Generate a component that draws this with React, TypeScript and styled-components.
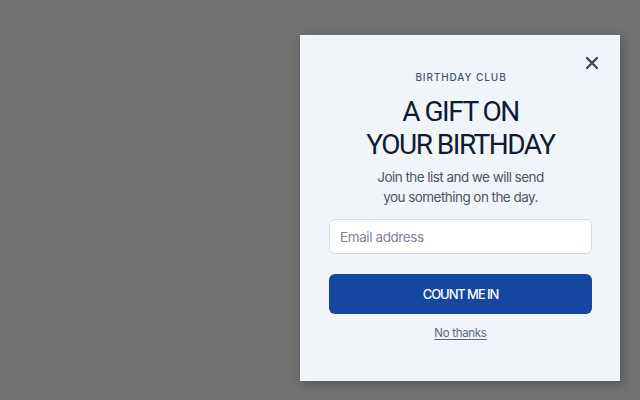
import styled, { createGlobalStyle } from "styled-components";

const GlobalStyle = createGlobalStyle`
  html, body {
    margin: 0;
    padding: 0;
  }
  body {
    font-family: Inter, "Noto Sans", sans-serif;
    background: #717170;
  }
`;

const Backdrop = styled.div`
  width: 640px;
  height: 400px;
  display: flex;
  justify-content: flex-end;
  align-items: flex-start;
  padding: 35px 20px 0 0;
  box-sizing: border-box;
  background: #717170;
`;

const Panel = styled.div`
  position: relative;
  width: 320px;
  height: 346px;
  box-sizing: border-box;
  background: #f1f5f9;
  box-shadow: 2px 3px 10px rgba(0, 0, 0, 0.25);
  padding: 35px 28px 0 29px;
  display: flex;
  flex-direction: column;
  align-items: center;
  text-align: center;
`;

const Close = styled.button`
  position: absolute;
  top: 21px;
  right: 21px;
  width: 14px;
  height: 14px;
  padding: 0;
  border: none;
  background: none;
  cursor: pointer;
  display: flex;
`;

const Eyebrow = styled.div`
  font-size: 10px;
  line-height: 14px;
  font-weight: 500;
  letter-spacing: 0.9px;
  color: #475569;
  padding-left: 1px;
`;

const Heading = styled.h1`
  margin: 11px 0 0;
  font-family: Roboto, Inter, sans-serif;
  font-size: 28px;
  line-height: 33px;
  font-weight: 400;
  letter-spacing: -1.5px;
  color: #0f1b33;
`;

const Body = styled.p`
  margin: 6px 0 0;
  font-size: 13.5px;
  line-height: 20px;
  color: #4b5563;
  letter-spacing: -0.55px;
`;

const Input = styled.input`
  margin-top: 12px;
  width: 100%;
  height: 35px;
  box-sizing: border-box;
  border: 1px solid #d3dbe6;
  border-radius: 6px;
  background: #ffffff;
  padding: 0 10px;
  font-family: inherit;
  font-size: 13.5px;
  letter-spacing: -0.4px;
  color: #1e293b;
  outline: none;

  &::placeholder {
    color: #7b8494;
  }
`;

const Primary = styled.button`
  margin-top: 20px;
  width: 100%;
  height: 40px;
  border: none;
  border-radius: 6px;
  background: #1546a0;
  color: #ffffff;
  font-family: inherit;
  font-size: 13px;
  font-weight: 500;
  letter-spacing: -1.1px;
  cursor: pointer;
`;

const Decline = styled.a`
  margin-top: 11px;
  font-size: 11.5px;
  line-height: 16px;
  letter-spacing: -0.3px;
  color: #5b6577;
  text-decoration: underline;
  text-underline-offset: 2px;
  cursor: pointer;
`;

export default function App() {
  return (
    <>
      <GlobalStyle />
      <Backdrop>
        <Panel>
          <Close aria-label="Close">
            <svg width="14" height="14" viewBox="0 0 14 14">
              <path d="M2 2L12 12M12 2L2 12" stroke="#3a4357" strokeWidth="2.3" strokeLinecap="round" />
            </svg>
          </Close>
          <Eyebrow>BIRTHDAY CLUB</Eyebrow>
          <Heading>
            A GIFT ON
            <br />
            YOUR BIRTHDAY
          </Heading>
          <Body>
            Join the list and we will send
            <br />
            you something on the day.
          </Body>
          <Input placeholder="Email address" />
          <Primary>COUNT ME IN</Primary>
          <Decline>No thanks</Decline>
        </Panel>
      </Backdrop>
    </>
  );
}
